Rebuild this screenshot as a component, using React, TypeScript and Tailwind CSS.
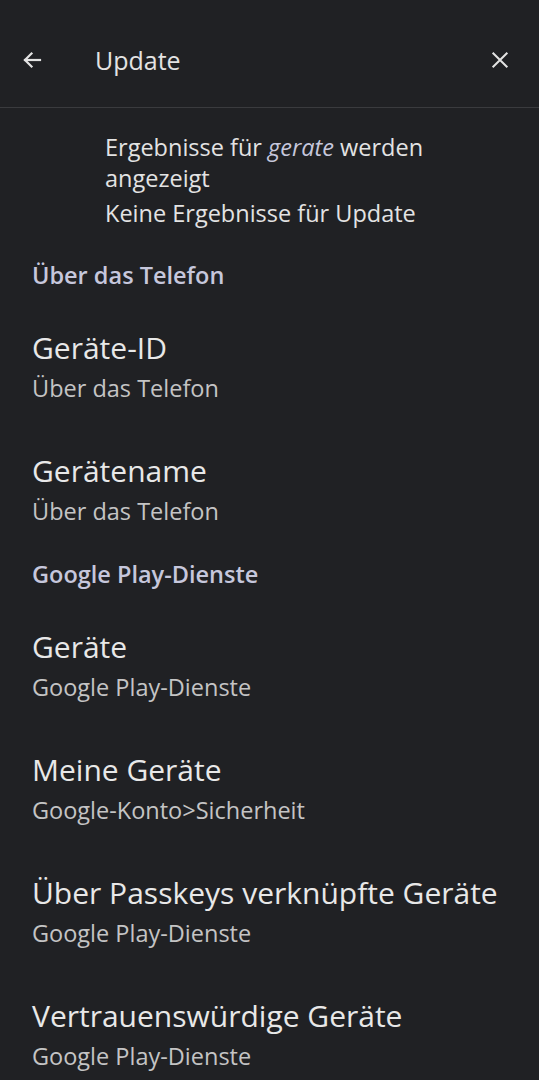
import React from "react";

type Entry = { title: string; sub: string };

const sections: { name: string; items: Entry[] }[] = [
  {
    name: "Über das Telefon",
    items: [
      { title: "Geräte-ID", sub: "Über das Telefon" },
      { title: "Gerätename", sub: "Über das Telefon" },
    ],
  },
  {
    name: "Google Play-Dienste",
    items: [
      { title: "Geräte", sub: "Google Play-Dienste" },
      { title: "Meine Geräte", sub: "Google-Konto>Sicherheit" },
      { title: "Über Passkeys verknüpfte Geräte", sub: "Google Play-Dienste" },
      { title: "Vertrauenswürdige Geräte", sub: "Google Play-Dienste" },
    ],
  },
];

function ArrowLeft() {
  return (
    <svg width="24" height="24" viewBox="0 0 24 24" fill="none" stroke="#e3e3e3" strokeWidth="2.2" strokeLinecap="square">
      <path d="M20 12H5" />
      <path d="M11.5 5.5 5 12l6.5 6.5" />
    </svg>
  );
}

function Close() {
  return (
    <svg width="22" height="22" viewBox="0 0 24 24" fill="none" stroke="#e3e3e3" strokeWidth="2.2">
      <path d="M4 4l16 16M20 4L4 20" />
    </svg>
  );
}

export default function App() {
  return (
    <div
      className="w-[539px] h-[1080px] overflow-hidden bg-[#202124] text-[#e3e3e3]"
      style={{ fontFamily: "'Open Sans', Roboto, sans-serif" }}
    >
      <div className="h-[108px] pt-[12px] flex items-center border-b border-[#3a3b3e]">
        <div className="w-[95px] pl-[20px] flex items-center">
          <ArrowLeft />
        </div>
        <div className="flex-1 text-[25px] leading-[30px] text-[#e3e3e3]">Update</div>
        <div className="pr-[28px] flex items-center">
          <Close />
        </div>
      </div>

      <div className="pl-[105px] pr-[24px] pt-[24px] pb-[8px] text-[23.5px] leading-[31px] text-[#e3e3e3]">
        <p>
          Ergebnisse für <em className="text-[#c6c7dc]">gerate</em> werden angezeigt
        </p>
        <p className="mt-[4px]">Keine Ergebnisse für Update</p>
      </div>

      {sections.map((s) => (
        <div key={s.name}>
          <div className="pl-[32px] pt-[23px] text-[23.5px] leading-[30px] font-semibold text-[#c6c7dc]">
            {s.name}
          </div>
          {s.items.map((it) => (
            <div key={it.title} className="pl-[32px] pt-[40px] pb-[10px]">
              <div className="text-[30px] leading-[36px] text-[#e8e8e8]">{it.title}</div>
              <div className="mt-[7px] text-[23.5px] leading-[30px] text-[#c4c4c4]">{it.sub}</div>
            </div>
          ))}
        </div>
      ))}
    </div>
  );
}
